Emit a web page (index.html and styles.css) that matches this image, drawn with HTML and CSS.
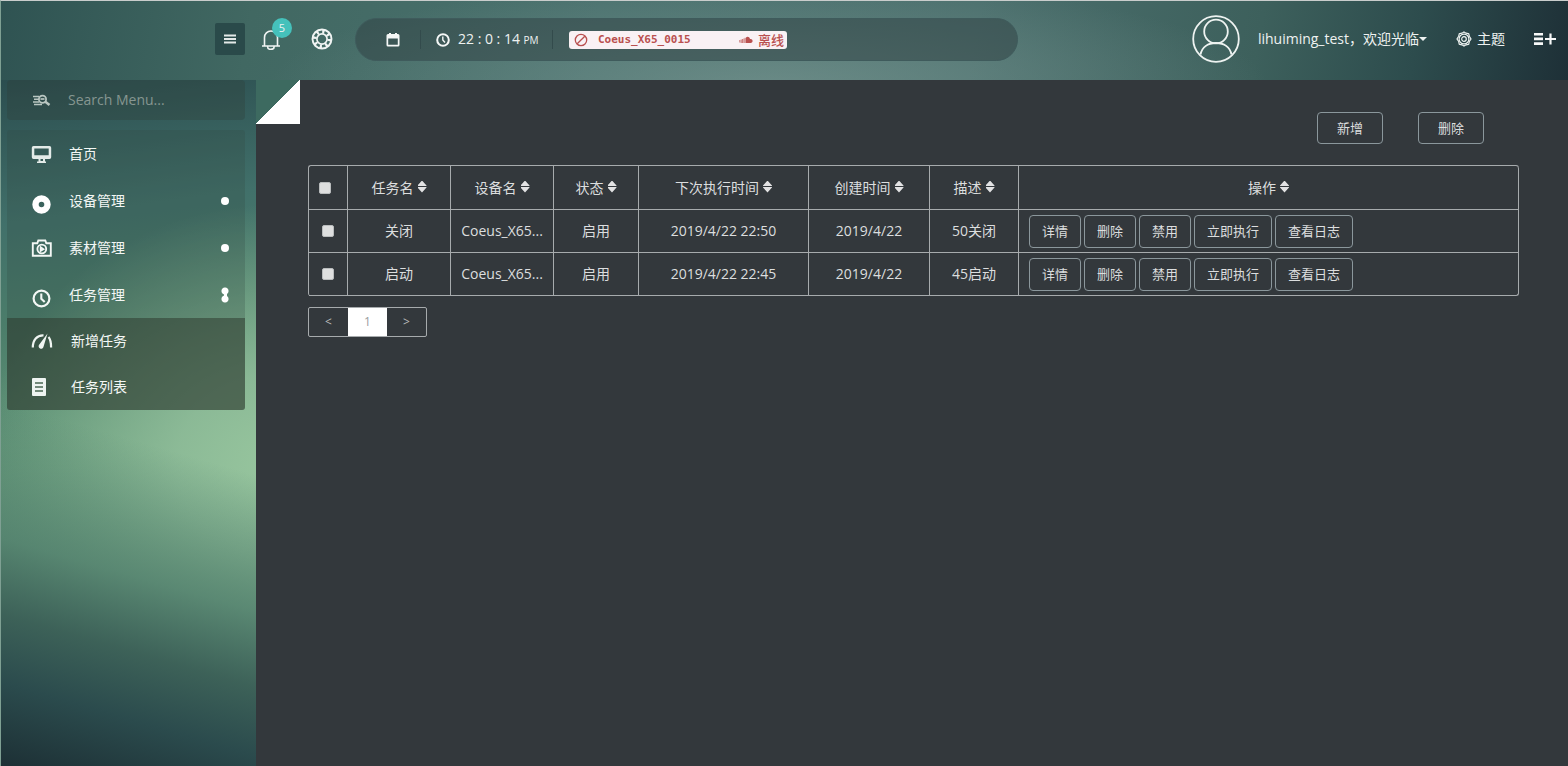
FILE: index.html
```html
<!DOCTYPE html>
<html lang="zh-CN">
<head>
<meta charset="utf-8">
<title>任务列表</title>
<link rel="stylesheet" href="styles.css">
</head>
<body>
<div class="page">
  <header class="topbar">
    <div class="topbar-left">
      <button class="menu-toggle" type="button" aria-label="Toggle menu">
        <svg width="12" height="10" viewBox="0 0 12 10"><path d="M0 1.500h12M0 5h12M0 8.500h12" stroke="#e3e9e8" stroke-width="2"/></svg>
      </button>
      <button class="icon-button bell" type="button" aria-label="Notifications">
        <svg width="20" height="22" viewBox="0 0 20 22" fill="none" stroke="#f0f4f3" stroke-width="1.600"><path d="M1 18h18M3.500 18V9.500a6.500 6.500 0 0 1 13 0V18M6.500 18.300a3.300 3 0 0 0 6.800 0"/></svg>
        <span class="badge">5</span>
      </button>
      <button class="icon-button" type="button" aria-label="Help">
        <svg width="22" height="22" viewBox="0 0 22 22" fill="none" stroke="#f0f4f3"><circle cx="11" cy="11" r="9.500" stroke-width="1.900"/><circle cx="11" cy="11" r="5.100" stroke-width="1.700"/><circle cx="11" cy="11" r="7.300" stroke-width="3.800" stroke-dasharray="2.200 3.533"/></svg>
      </button>
    </div>
    <div class="status-pill">
      <span class="pill-item pill-date">
        <svg width="14" height="14" viewBox="0 0 14 14"><path fill="#f5f8f7" fill-rule="evenodd" d="M2 1h1V0h2v1h4V0h2v1h1a1.500 1.500 0 0 1 1.500 1.500v9.500A1.500 1.500 0 0 1 12 13.500H2A1.500 1.500 0 0 1 .5 12V2.500A1.500 1.500 0 0 1 2 1zm.2 4.500v6.300h9.600V5.500z"/></svg>
      </span>
      <span class="pill-item pill-clock">
        <svg width="14" height="14" viewBox="0 0 14 14" fill="none" stroke="#f5f8f7"><circle cx="7" cy="7" r="5.800" stroke-width="2"/><path d="M6.800 3.500V7l2.200 2.500" stroke-width="1.400"/></svg>
        <span>22 : 0 : 14 <small>PM</small></span>
      </span>
      <span class="device-tag">
        <svg width="14" height="14" viewBox="0 0 14 14" fill="none" stroke="#b9504f" stroke-width="1.300"><circle cx="7" cy="7" r="5.700"/><path d="M3.200 10.800l7.600-7.600"/></svg>
        <strong>Coeus_X65_0015</strong>
        <span class="device-state">
          <svg width="14" height="8" viewBox="0 0 14 8" fill="#b9504f"><path d="M7 7V1.400C8.500.3 10.600.9 11 3.100c1.500-.3 2.600.6 2.600 1.900C13.600 6.200 12.700 7 11.600 7z"/><path d="M.8 4v2.500M2.200 3.500V7M3.600 3V7M5 2.500V7M6.200 1.800V7" stroke="#b9504f" stroke-width=".8"/></svg>
          离线
        </span>
      </span>
    </div>
    <div class="topbar-right">
      <svg class="avatar" width="48" height="48" viewBox="0 0 48 48" fill="none" stroke="#eef3f1" stroke-width="1.800"><circle cx="24" cy="24" r="22.800"/><circle cx="24" cy="16.500" r="11.800"/><path d="M8.500 39.500C10 32 16 28 24 28s14 4 15.500 11.500"/></svg>
      <button class="text-button user" type="button">lihuiming_test，欢迎光临<span class="caret"></span></button>
      <button class="text-button theme" type="button">
        <svg width="16" height="16" viewBox="0 0 16 16" fill="none" stroke="#eef3f1" stroke-width="1.200"><circle cx="8" cy="8" r="2.300"/><circle cx="8" cy="8" r="4.900"/><path d="M8 1l2 1.200 2.700.5.600 2.500L15 8l-1.700 2.500-.6 2.800-2.700.5L8 15l-2-1.200-2.700-.5-.6-2.800L1 8l1.700-2.800.6-2.500L6 2.200z"/></svg>
        主题
      </button>
      <button class="icon-button" type="button" aria-label="Open panel">
        <svg width="22" height="14" viewBox="0 0 22 14" stroke="#f7f9f9"><path d="M0 2.200h9M0 6.900h9M0 11.600h9" stroke-width="2.600"/><path d="M11 7h11M16.500 1.500v11" stroke-width="2.200"/></svg>
      </button>
    </div>
  </header>

  <div class="body">
    <aside class="sidebar">
      <label class="search">
        <svg width="18" height="14" viewBox="0 0 18 14" fill="none" stroke="#b9c6c1"><path d="M0 3.500h6M1 6.200h5M0 8.900h6M1 11.500h8" stroke-width="1.500"/><circle cx="9.500" cy="6.200" r="3.600" stroke-width="1.800"/><path d="M7.500 6h4" stroke-width="1.700"/><path d="M12 8.500l4.500 3.500" stroke-width="2.500"/></svg>
        <input type="text" placeholder="Search Menu..." aria-label="Search Menu">
      </label>
      <nav class="menu">
        <a class="menu-item" href="#">
          <svg width="22" height="20" viewBox="0 0 22 20"><path fill="#e3ebe8" fill-rule="evenodd" d="M2.500 2h16A1.700 1.700 0 0 1 20.200 3.700v9.600A1.700 1.700 0 0 1 18.500 15h-16A1.700 1.700 0 0 1 .8 13.300V3.700A1.700 1.700 0 0 1 2.500 2zm.8 2.500v6.800h14.400V4.500zM7.500 15h2v2H12v-2h2v2.500h1V19H6v-1.500h1.500z"/></svg>
          <span>首页</span>
        </a>
        <a class="menu-item" href="#">
          <svg width="22" height="26" viewBox="0 0 22 26"><circle cx="10.500" cy="16.500" r="6" fill="none" stroke="#fff" stroke-width="6.400"/></svg>
          <span>设备管理</span><i class="dot"></i>
        </a>
        <a class="menu-item" href="#">
          <svg width="22" height="20" viewBox="0 0 22 20" fill="none" stroke="#f3f7f5" stroke-width="1.900"><path d="M1.800 5.300h4.500L7.300 2.500h7l1 2.800h4.500v12.400h-18z"/><circle cx="10.800" cy="11" r="4.400"/><path d="M9.700 9.300v3.400l2.600-1.600z"/></svg>
          <span>素材管理</span><i class="dot"></i>
        </a>
        <a class="menu-item" href="#">
          <svg width="22" height="26" viewBox="0 0 22 26" fill="none" stroke="#f3f7f5"><circle cx="10.500" cy="16.500" r="7.900" stroke-width="2.200"/><path d="M10.300 11.500v5.300l3.400 3.200" stroke-width="2.100"/></svg>
          <span>任务管理</span><i class="dot dot-open"></i>
        </a>
        <div class="submenu">
          <a class="menu-item" href="#">
            <svg width="22" height="20" viewBox="0 0 22 20" fill="none" stroke="#f0f5f2" stroke-width="2.200"><path d="M1.800 16.500C1.800 9 6 4 12.500 4.300M17.500 6c1.800 2 2.600 5.500 2.600 10.500"/><path d="M16.500 2.500L8.300 13.500a2.500 2.500 0 1 0 4.300 2z" fill="#f0f5f2" stroke="none"/></svg>
            <span>新增任务</span>
          </a>
          <a class="menu-item" href="#">
            <svg width="22" height="20" viewBox="0 0 22 20"><rect x="1" y="1" width="14" height="18" rx="1" fill="#eef4f1"/><path d="M4 6h8M4 10h8M4 14h8" stroke="#486552" stroke-width="1.700"/></svg>
            <span>任务列表</span>
          </a>
        </div>
      </nav>
    </aside>

    <main class="content">
      <div class="fold"></div>
      <div class="toolbar">
        <button class="btn btn-wide" type="button">新增</button>
        <button class="btn btn-wide" type="button">删除</button>
      </div>
      <table class="tasks">
        <colgroup><col class="c-check"><col class="c-name"><col class="c-name"><col class="c-state"><col class="c-next"><col class="c-created"><col class="c-desc"><col></colgroup>
        <thead>
          <tr>
            <th class="check"><input type="checkbox" aria-label="全选"></th>
            <th>任务名<i class="sort"></i></th>
            <th>设备名<i class="sort"></i></th>
            <th>状态<i class="sort"></i></th>
            <th>下次执行时间<i class="sort"></i></th>
            <th>创建时间<i class="sort"></i></th>
            <th>描述<i class="sort"></i></th>
            <th>操作<i class="sort"></i></th>
          </tr>
        </thead>
        <tbody>
          <tr>
            <td class="check"><input type="checkbox" aria-label="选择 关闭"></td>
            <td>关闭</td><td>Coeus_X65...</td><td>启用</td><td>2019/4/22 22:50</td><td>2019/4/22</td><td>50关闭</td>
            <td><div class="actions"><button class="btn" type="button">详情</button><button class="btn" type="button">删除</button><button class="btn" type="button">禁用</button><button class="btn" type="button">立即执行</button><button class="btn" type="button">查看日志</button></div></td>
          </tr>
          <tr>
            <td class="check"><input type="checkbox" aria-label="选择 启动"></td>
            <td>启动</td><td>Coeus_X65...</td><td>启用</td><td>2019/4/22 22:45</td><td>2019/4/22</td><td>45启动</td>
            <td><div class="actions"><button class="btn" type="button">详情</button><button class="btn" type="button">删除</button><button class="btn" type="button">禁用</button><button class="btn" type="button">立即执行</button><button class="btn" type="button">查看日志</button></div></td>
          </tr>
        </tbody>
      </table>
      <nav class="pager" aria-label="分页">
        <button type="button">&lt;</button><button class="current" type="button">1</button><button type="button">&gt;</button>
      </nav>
    </main>
  </div>
</div>
</body>
</html>
```
FILE: styles.css
```css
* {
  box-sizing: border-box;
}

body {
  margin: 0;
  font: 14px/20px "Open Sans", "Noto Sans CJK SC", sans-serif;
  color: #dcdedf;
}

button,
input {
  margin: 0;
  font: inherit;
  color: inherit;
}

button {
  padding: 0;
  border: 0;
  background: none;
}

svg {
  display: block;
  flex: none;
}

.page {
  display: flex;
  flex-direction: column;
  min-height: 100vh;
  border-top: 1px solid #c9cdcc;
  border-left: 1px solid #7fa093;
  background: #27474a;
}

/* Top bar */
.topbar {
  display: flex;
  align-items: center;
  height: 79px;
  padding: 0 12px 4px 214px;
  color: #eef2f1;
  background:
    radial-gradient(ellipse 500px 110px at 49% 110%, rgba(120, 150, 145, 0.7), rgba(120, 150, 145, 0) 100%),
    linear-gradient(100deg, #2f5352 0%, #416862 16%, #4a716e 38%, #4b6f6d 62%, #3d605c 80%, #2d4c4d 90%, #1e3037 100%);
}

.topbar-left {
  display: flex;
  align-items: center;
  width: 140px;
}

.menu-toggle {
  display: grid;
  place-items: center;
  width: 30px;
  height: 32px;
  margin-right: 16px;
  border-radius: 2px;
  background: #2a4a4a;
}

.icon-button {
  position: relative;
}

.bell {
  margin-right: 30px;
}

.badge {
  position: absolute;
  top: -10px;
  left: 11px;
  width: 20px;
  height: 20px;
  border-radius: 50%;
  background: #45c1bb;
  font-size: 11px;
  text-align: center;
}

.status-pill {
  display: flex;
  flex: 1;
  align-items: center;
  height: 43px;
  margin-top: 2px;
  margin-right: 174px;
  padding-left: 30px;
  border: 1px solid #3f5b5c;
  border-radius: 22px;
  background: rgba(50, 68, 70, 0.55);
}

.pill-item {
  display: flex;
  align-items: center;
  gap: 8px;
  height: 19px;
  border-right: 1px solid #334b4c;
}

.pill-date {
  width: 35px;
}

.pill-clock {
  width: 132px;
  padding-left: 15px;
  white-space: nowrap;
}

.pill-clock small {
  font-size: 10px;
}

.device-tag {
  display: flex;
  align-items: center;
  width: 218px;
  height: 18px;
  margin-left: 16px;
  padding: 0 3px 0 5px;
  border-radius: 3px;
  background: #f9f1f4;
  color: #b9504f;
}

.device-tag strong {
  flex: 1;
  padding-left: 10px;
  font: bold 11px/18px "DejaVu Sans Mono", monospace;
}

.device-state {
  display: flex;
  align-items: center;
  gap: 5px;
  font-size: 13px;
  font-weight: 500;
  line-height: 18px;
}

.topbar-right {
  display: flex;
  align-items: center;
  white-space: nowrap;
}

.avatar {
  margin-right: 18px;
}

.text-button {
  display: flex;
  align-items: center;
}

.user {
  margin-right: 29px;
}

.caret {
  border: 4px solid transparent;
  border-top-color: #eef2f1;
  border-bottom: 0;
}

.theme {
  gap: 5px;
  margin-right: 29px;
}

/* Sidebar */
.body {
  display: grid;
  grid-template-columns: 255px 1fr;
  flex: 1;
}

.sidebar {
  padding: 0 11px 0 6px;
  background:
    linear-gradient(196deg, rgba(80, 130, 108, 0) 52%, rgba(80, 126, 108, 0.8) 70%, rgba(58, 94, 86, 0.95) 80%, #2b4b4d 89%, #1d3035 100%),
    radial-gradient(ellipse 300px 260px at 110% 56%, rgba(154, 200, 160, 0.95) 0%, rgba(150, 195, 158, 0.8) 35%, rgba(130, 178, 144, 0) 100%),
    linear-gradient(172deg, #2b4d4f 0%, #41706a 20%, #4b7d6a 34%, #649879 55%, #6fa180 70%);
}

.search {
  display: flex;
  align-items: center;
  gap: 11px;
  height: 40px;
  margin-bottom: 10px;
  padding-left: 26px;
  border-radius: 4px;
  background: rgba(45, 60, 52, 0.3);
}

.search input {
  flex: 1;
  min-width: 0;
  padding: 0 6px;
  border: 0;
  outline: 0;
  background: none;
}

.search input::placeholder {
  color: #869691;
  opacity: 1;
}

.menu {
  overflow: hidden;
  border-radius: 3px;
  background: rgba(50, 75, 65, 0.26);
}

.menu-item {
  display: flex;
  align-items: center;
  gap: 16px;
  height: 47px;
  padding: 0 16px 0 24px;
  color: #f3f7f5;
  text-decoration: none;
}

.menu-item span {
  flex: 1;
}

.dot {
  width: 8px;
  height: 8px;
  border-radius: 50%;
  background: #fff;
}

.dot-open {
  height: 16px;
  border-radius: 0;
  background:
    radial-gradient(circle at 4px 4px, #fff 3px, transparent 4px),
    radial-gradient(circle at 4px 12px, #fff 3px, transparent 4px),
    linear-gradient(#fff, #fff) center / 3px 10px no-repeat;
}

.submenu {
  background: rgba(45, 55, 45, 0.52);
}

.submenu .menu-item {
  gap: 18px;
  height: 46px;
}

/* Content */
.content {
  position: relative;
  min-width: 0;
  padding: 32px 49px 32px 52px;
  background: #33383c;
}

.fold {
  position: absolute;
  top: 0;
  left: 0;
  width: 44px;
  height: 44px;
  background: linear-gradient(135deg, #3d6a60 50%, #fff 50%);
}

.toolbar {
  display: flex;
  justify-content: flex-end;
  gap: 35px;
  margin-bottom: 21px;
  padding-right: 35px;
}

.btn {
  height: 33px;
  padding: 0 12px;
  border: 1px solid #8b979c;
  border-radius: 4px;
  font-size: 13px;
  white-space: nowrap;
}

.btn-wide {
  height: 32px;
  padding: 0 19px;
}

.tasks {
  width: 100%;
  table-layout: fixed;
  border: 1px solid #a7abad;
  border-right: 0;
  border-bottom: 0;
  border-spacing: 0;
  border-radius: 3px;
}

.c-check {
  width: 39px;
}

.c-name {
  width: 103px;
}

.c-state {
  width: 85px;
}

.c-next {
  width: 170px;
}

.c-created {
  width: 121px;
}

.c-desc {
  width: 89px;
}

.tasks th,
.tasks td {
  height: 43px;
  padding: 0;
  border-right: 1px solid #a7abad;
  border-bottom: 1px solid #a7abad;
  font-weight: 400;
  text-align: center;
  white-space: nowrap;
}

.tasks th {
  height: 44px;
}

.tasks th:last-child {
  border-top-right-radius: 3px;
}

.tasks tr:last-child td:last-child {
  border-bottom-right-radius: 3px;
}

.check input {
  display: block;
  width: 12px;
  height: 12px;
  margin: 0 auto;
  border: 1px solid #b9bcbd;
  border-radius: 2px;
  background: #dedfdf;
  appearance: none;
}

.tasks th.check {
  padding-right: 6px;
}

.sort {
  display: inline-block;
  width: 9px;
  height: 12px;
  margin-left: 4px;
  background: #e2e2e3;
  clip-path: polygon(50% 0, 100% 42%, 100% 46%, 0 46%, 0 54%, 100% 54%, 100% 58%, 50% 100%, 0 58%, 0 42%);
}

.actions {
  display: flex;
  gap: 3px;
  padding-left: 10px;
}

.pager {
  display: inline-flex;
  margin-top: 11px;
  border: 1px solid #a7abad;
  border-radius: 2px;
}

.pager button {
  width: 39px;
  height: 28px;
  color: #b7babb;
  font-size: 12px;
}

.pager .current {
  background: #fff;
  color: #9a9d9f;
}
```
